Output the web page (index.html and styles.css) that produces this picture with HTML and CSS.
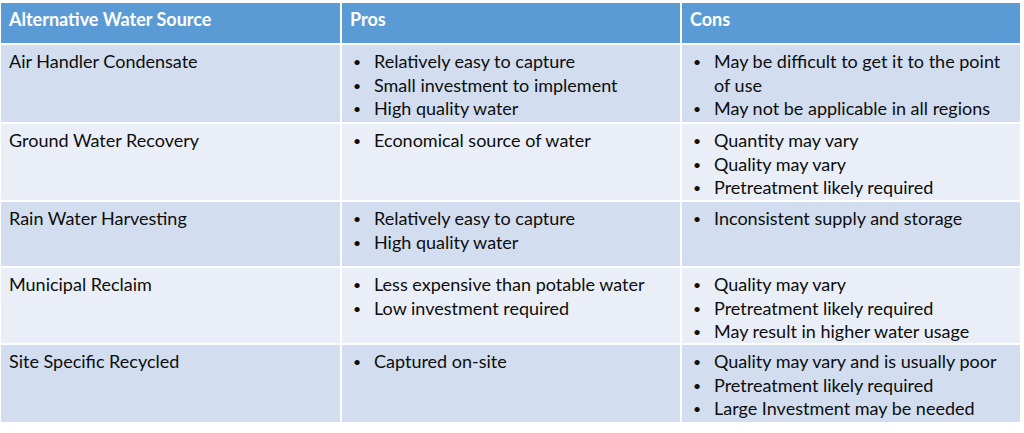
FILE: index.html
```html
<!DOCTYPE html>
<html lang="en">
<head>
<meta charset="utf-8">
<title>Alternative Water Sources</title>
<link rel="stylesheet" href="styles.css">
</head>
<body>
<div class="table">
  <div class="cell head">Alternative Water Source</div>
  <div class="cell head">Pros</div>
  <div class="cell head">Cons</div>

  <div class="cell odd r1">Air Handler Condensate</div>
  <div class="cell odd r1"><ul class="list">
    <li><span class="dot">•</span><span>Relatively easy to capture</span></li>
    <li><span class="dot">•</span><span>Small investment to implement</span></li>
    <li><span class="dot">•</span><span>High quality water</span></li>
  </ul></div>
  <div class="cell odd r1"><ul class="list">
    <li><span class="dot">•</span><span>May be difficult to get it to the point of use</span></li>
    <li><span class="dot">•</span><span>May not be applicable in all regions</span></li>
  </ul></div>

  <div class="cell even">Ground Water Recovery</div>
  <div class="cell even"><ul class="list">
    <li><span class="dot">•</span><span>Economical source of water</span></li>
  </ul></div>
  <div class="cell even"><ul class="list">
    <li><span class="dot">•</span><span>Quantity may vary</span></li>
    <li><span class="dot">•</span><span>Quality may vary</span></li>
    <li><span class="dot">•</span><span>Pretreatment likely required</span></li>
  </ul></div>

  <div class="cell odd">Rain Water Harvesting</div>
  <div class="cell odd"><ul class="list">
    <li><span class="dot">•</span><span>Relatively easy to capture</span></li>
    <li><span class="dot">•</span><span>High quality water</span></li>
  </ul></div>
  <div class="cell odd"><ul class="list">
    <li><span class="dot">•</span><span>Inconsistent supply and storage</span></li>
  </ul></div>

  <div class="cell even">Municipal Reclaim</div>
  <div class="cell even"><ul class="list">
    <li><span class="dot">•</span><span>Less expensive than potable water</span></li>
    <li><span class="dot">•</span><span>Low investment required</span></li>
  </ul></div>
  <div class="cell even"><ul class="list">
    <li><span class="dot">•</span><span>Quality may vary</span></li>
    <li><span class="dot">•</span><span>Pretreatment likely required</span></li>
    <li><span class="dot">•</span><span>May result in higher water usage</span></li>
  </ul></div>

  <div class="cell odd">Site Specific Recycled</div>
  <div class="cell odd"><ul class="list">
    <li><span class="dot">•</span><span>Captured on-site</span></li>
  </ul></div>
  <div class="cell odd"><ul class="list">
    <li><span class="dot">•</span><span>Quality may vary and is usually poor</span></li>
    <li><span class="dot">•</span><span>Pretreatment likely required</span></li>
    <li><span class="dot">•</span><span>Large Investment may be needed</span></li>
  </ul></div>
</div>
</body>
</html>
```

FILE: styles.css
```css
html, body {
  margin: 0;
  padding: 0;
  background: #ffffff;
}

body {
  padding: 3px 4px 0 1px;
  font-family: Lato, "Open Sans", sans-serif;
  font-size: 18px;
  color: #0d0d0d;
}

.table {
  display: grid;
  grid-template-columns: 339px 338px 338px;
  grid-template-rows: 40px 77px 76px 64px 75px 77px;
  gap: 2px;
}

.cell {
  padding: 5px 8px 0 8px;
  line-height: 23.5px;
}

.head {
  background: #5b9bd5;
  color: #ffffff;
  font-weight: bold;
  padding-top: 5px;
}

.odd {
  background: #d2deef;
}

.even {
  background: #eaeff7;
}

.list {
  list-style: none;
  margin: 0;
  padding: 0 0 0 3px;
}

.list li {
  display: grid;
  grid-template-columns: 21px 1fr;
}

.dot {
  font-size: 14px;
}
```
